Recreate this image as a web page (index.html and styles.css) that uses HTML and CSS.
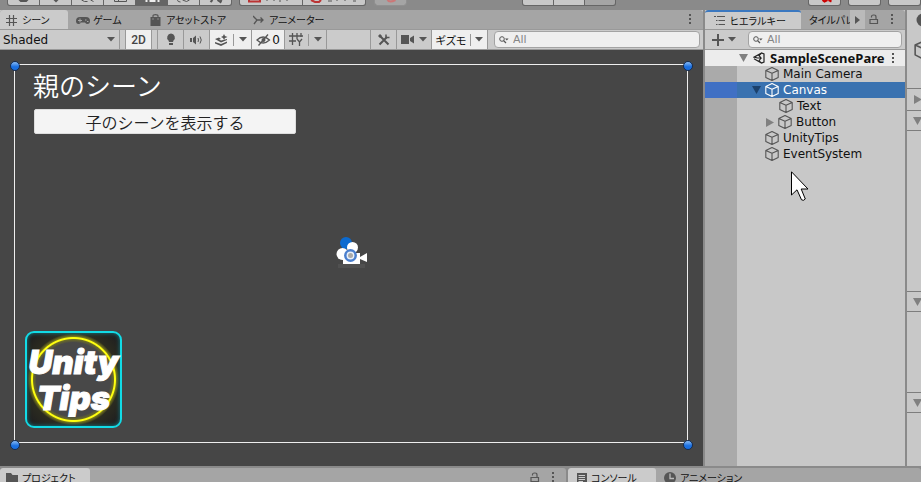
FILE: index.html
```html
<!DOCTYPE html>
<html lang="ja">
<head>
<meta charset="utf-8">
<title>SampleScenePare</title>
<link rel="stylesheet" href="styles.css">
</head>
<body>
<svg class="defs" aria-hidden="true">
  <symbol id="cube" viewBox="0 0 14 14"><path d="M7 .6 13.2 3.5V10.4L7 13.5 .8 10.4V3.5ZM.8 3.5 7 6.3 13.2 3.5M7 6.3V13.5" fill="none" stroke="currentColor" stroke-width="1.1" stroke-linejoin="round"/></symbol>
  <symbol id="down" viewBox="0 0 8 5"><path d="M0 0H8L4 4.6Z" fill="currentColor"/></symbol>
  <symbol id="fold" viewBox="0 0 9 8"><path d="M0 0H9L4.5 8Z" fill="currentColor"/></symbol>
  <symbol id="right" viewBox="0 0 8 9"><path d="M0 0V9L8 4.5Z" fill="currentColor"/></symbol>
  <symbol id="next" viewBox="0 0 5 8"><path d="M0 0V8L5 4Z" fill="currentColor"/></symbol>
  <symbol id="dots" viewBox="0 0 3 11"><path d="M0 0H2V2H0ZM0 4H2V6H0ZM0 8H2V10H0Z" fill="currentColor"/></symbol>
  <symbol id="lock" viewBox="0 0 10 11"><path d="M1 5.5H8.5V9.5H1ZM2.5 3.5V2.5Q2.5 1 4.5 1H5Q7 1 7 3V5.5" fill="none" stroke="currentColor" stroke-width="1.2"/></symbol>
  <symbol id="search" viewBox="0 0 10 8"><circle cx="3" cy="3" r="2.3" fill="none" stroke="currentColor"/><path d="M4.6 4.6 7 7" stroke="currentColor" stroke-width="1.3"/><path d="M6 2.4H9.6L7.8 4.4Z" fill="currentColor"/></symbol>
</svg>

<header class="topbar">
  <div class="group">
    <button class="tool" aria-label="手のひら"><svg viewBox="0 0 30 5"><path d="M10 0H20L18 2H12Z" fill="#555"/></svg></button>
    <button class="tool" aria-label="移動"><svg viewBox="0 0 30 5"><path d="M13 0H18L15.500 2.500Z" fill="#555"/></svg></button>
    <button class="tool" aria-label="回転"><svg viewBox="0 0 30 5"><path d="M9 0 12 1.500H15M18 0 21 1.500" stroke="#555" fill="none"/></svg></button>
    <button class="tool" aria-label="拡大縮小"><svg viewBox="0 0 30 5"><path d="M10 0V1.500H22V0M14 0V1" stroke="#555" fill="none"/></svg></button>
    <button class="tool on" aria-label="矩形"><svg viewBox="0 0 30 5"><path d="M9 0H11V2H9ZM13 0H19V2H13ZM21 0H23V2H21Z" fill="#eee"/></svg></button>
    <button class="tool" aria-label="変形"><svg viewBox="0 0 30 5"><path d="M9 0Q9 2 12 2M14 0 18 1.500 21 0" stroke="#555" fill="none"/></svg></button>
    <button class="tool" aria-label="カスタム"><svg viewBox="0 0 30 5"><path d="M10 2 12 0M17 0 20 2 21 0" stroke="#555" stroke-width="2" fill="none"/></svg></button>
  </div>
  <div class="group pivot">
    <button class="tool wide" aria-label="ピボット"><svg viewBox="0 0 62 5"><path d="M9 0V1.500H20V0" stroke="#b33" stroke-width="2" fill="none"/><path d="M27 0V1M34 0V1M39 1H41M47 0V1" stroke="#555"/></svg></button>
    <button class="tool wide" aria-label="ローカル"><svg viewBox="0 0 62 5"><path d="M8 0 12 2H16L18 0" stroke="#b33" stroke-width="2" fill="none"/><path d="M25 1H29M34 0V1M42 0V1M50 1H53" stroke="#555"/></svg></button>
  </div>
  <div class="group snap"><button class="tool faded" aria-label="スナップ"><svg viewBox="0 0 30 5"><path d="M12 0Q14 3 20 0" stroke="#c77" stroke-width="2" fill="none"/></svg></button></div>
  <div class="group play">
    <button class="tool" aria-label="再生"></button>
    <button class="tool" aria-label="一時停止"></button>
    <button class="tool faded" aria-label="コマ送り"></button>
  </div>
  <div class="group cloud"><button class="tool" aria-label="コラボ"><svg viewBox="0 0 30 5"><path d="M13 0 15 1.500 18 0M19 0 22 1.500" stroke="#c00" stroke-width="2" fill="none"/></svg></button></div>
  <div class="group account"><button class="tool" aria-label="クラウド"></button></div>
  <div class="group layers"><button class="tool" aria-label="レイヤー"></button></div>
</header>

<main class="workspace">
  <section class="panel">
    <nav class="tabs">
      <button class="tab scene-tab active"><svg width="11" height="11" viewBox="0 0 11 11"><path d="M3.500 0V11M7.500 0V11M0 3.500H11M0 7.500H11" stroke="currentColor" stroke-width="1.200"/></svg>シーン</button>
      <button class="tab game-tab"><svg width="14" height="9" viewBox="0 0 14 9"><path d="M4 1H10Q14 1 14 5Q14 8 11.500 8Q10 8 9 6.500H5Q4 8 2.500 8Q0 8 0 5Q0 1 4 1Z" fill="currentColor"/><path d="M2 4.500H6M4 2.500V6.500M9 4H10.500M11 5.500H12.500" stroke="#a5a5a5"/></svg>ゲーム</button>
      <button class="tab store-tab"><svg width="11" height="12" viewBox="0 0 11 12"><path d="M.5 3H10.500V12H.5Z" fill="currentColor"/><path d="M3 4V2Q3 .7 5.500 .7T8 2V4" stroke="currentColor" fill="none" stroke-width="1.200"/><path d="M3 4V6M8 4V6" stroke="#888"/></svg>アセットストア</button>
      <button class="tab animator-tab"><svg width="11" height="10" viewBox="0 0 11 10"><path d="M0 1 4 5 1 9M3 5H10M7.500 2.500 10 5 7.500 7.500" stroke="currentColor" fill="none" stroke-width="1.300"/></svg>アニメーター</button>
      <button class="icon-btn tab-menu" aria-label="メニュー"><svg width="3" height="11"><use href="#dots"/></svg></button>
    </nav>
    <div class="toolbar">
      <label class="shade"><select aria-label="描画モード"><option>Shaded</option></select><svg width="8" height="5"><use href="#down"/></svg></label>
      <button class="tb on two-d">2D</button>
      <button class="tb bulb" aria-label="ライト"><svg width="10" height="13" viewBox="0 0 10 13"><path d="M5 .5A4 4 0 0 1 7.500 7.500L7 9H3L2.500 7.500A4 4 0 0 1 5 .5ZM3 10H7V12H3Z" fill="currentColor"/></svg></button>
      <button class="tb" aria-label="オーディオ"><svg width="13" height="10" viewBox="0 0 13 10"><path d="M0 3H2V7H0ZM3 3 6 .5V9.500L3 7Z" fill="currentColor"/><path d="M8 3Q9 5 8 7M10 1.500Q12.500 5 10 8.500" stroke="currentColor" fill="none"/></svg></button>
      <button class="tb on split" aria-label="エフェクト"><svg width="13" height="12" viewBox="0 0 13 12"><path d="M0 5 4 3.500 6 5 4 5.500 6 6.500 12 5 12 6 6 8.500ZM0 8 6 10 12 7.500V9L6 12 0 9.500ZM9 0 10 2 12.500 3 10 4 9 6 8 4 6 3 8 2Z" fill="currentColor"/></svg><i></i><svg width="8" height="5"><use href="#down"/></svg></button>
      <button class="tb on hidden-count"><svg width="15" height="12" viewBox="0 0 15 12"><path d="M1 6Q7 0 13.500 6Q7 12 1 6ZM2.500 11.500 12 .5" fill="none" stroke="currentColor" stroke-width="1.300"/><circle cx="7.500" cy="6" r="2" fill="currentColor"/></svg>0</button>
      <button class="tb split grid-tb" aria-label="グリッド"><svg width="14" height="13" viewBox="0 0 14 13"><path d="M3.500 0V12M8 0V6M12 0V4M0 3H14M0 8H7M8 6 10.500 9 13 6M10.500 9V13" fill="none" stroke="currentColor" stroke-width="1.300"/></svg><i></i><svg width="8" height="5"><use href="#down"/></svg></button>
      <span class="fill"></span>
      <button class="tb tools" aria-label="ツール"><svg width="12" height="12" viewBox="0 0 12 12"><path d="M1.500 1.500 10.500 10.500M1.500 10.500 9 3" stroke="currentColor" stroke-width="2"/><path d="M8 .5V3.500H11.500" stroke="currentColor" stroke-width="1.500" fill="none"/><path d="M0 2 2 0 4 2 2 4Z" fill="currentColor"/></svg></button>
      <button class="tb camera" aria-label="カメラ"><svg width="13" height="9" viewBox="0 0 13 9"><path d="M0 0H8V9H0ZM9 3 13 .5V8.500L9 6Z" fill="currentColor"/></svg><svg width="8" height="5"><use href="#down"/></svg></button>
      <button class="tb on gizmo">ギズモ<i></i><svg width="8" height="5"><use href="#down"/></svg></button>
      <label class="search"><svg width="10" height="8"><use href="#search"/></svg><input type="search" placeholder="All" aria-label="シーンを検索"></label>
    </div>
    <div class="scene">
      <div class="frame">
        <span class="handle tl"></span><span class="handle tr"></span><span class="handle bl"></span><span class="handle br"></span>
        <h1>親のシーン</h1>
        <button class="show-child">子のシーンを表示する</button>
        <svg class="cam" width="32" height="34" viewBox="0 0 32 34"><path d="M2 27H29V31H2Z" fill="#5a5a5a" opacity=".5"/><circle cx="10" cy="6" r="6" fill="#0b6ad0"/><circle cx="16.500" cy="10.500" r="5.500" fill="#fff"/><circle cx="6.500" cy="17" r="6" fill="#fff"/><path d="M7 16H24V20L31 16V25L24 22V27H7Z" fill="#fff"/><circle cx="14.500" cy="18.500" r="5.200" fill="#e8f0fa" stroke="#4a7fce" stroke-width="2.500"/><circle cx="14.500" cy="18.500" r="2.500" fill="#aaa"/></svg>
        <div class="logo"><span>Unity</span><span>Tips</span></div>
      </div>
    </div>
  </section>

  <section class="panel hierarchy">
    <nav class="tabs">
      <button class="tab hier-tab active"><svg width="11" height="9" viewBox="0 0 11 9"><path d="M0 .5H2M3 .5H11M2 4.500H3.500M4.500 4.500H11M2 8.500H3.500M4.500 8.500H11" stroke="currentColor"/></svg>ヒエラルキー</button>
      <button class="tab tile-tab">タイルパレット</button>
      <button class="next-tab" aria-label="次のタブ"><svg width="5" height="8"><use href="#next"/></svg></button>
      <button class="icon-btn" aria-label="ロック"><svg width="10" height="11"><use href="#lock"/></svg></button>
      <button class="icon-btn menu" aria-label="メニュー"><svg width="3" height="11"><use href="#dots"/></svg></button>
    </nav>
    <div class="toolbar">
      <button class="add" aria-label="作成"><svg width="12" height="12" viewBox="0 0 12 12"><path d="M6 0V12M0 6H12" stroke="currentColor" stroke-width="2"/></svg><svg width="8" height="5"><use href="#down"/></svg></button>
      <label class="search"><svg width="10" height="8"><use href="#search"/></svg><input type="search" placeholder="All" aria-label="ヒエラルキーを検索"></label>
    </div>
    <ul class="tree">
      <li class="root"><svg class="fold" width="9" height="8"><use href="#fold"/></svg><svg width="12" height="12" viewBox="0 0 12 12"><path d="M8.500 1 1 5.200 4.500 6H8L6 3.500 8.500 1 11 2V10L8.500 11 1 6.800M8.500 11 6 9 8 6" fill="none" stroke="#222" stroke-width="1.200"/></svg><b>SampleScenePare</b><svg class="row-dots" width="3" height="11"><use href="#dots"/></svg></li>
      <li><svg width="14" height="14"><use href="#cube"/></svg>Main Camera</li>
      <li class="selected"><svg class="fold" width="9" height="8"><use href="#fold"/></svg><svg width="14" height="14"><use href="#cube"/></svg>Canvas</li>
      <li class="child"><svg width="14" height="14"><use href="#cube"/></svg>Text</li>
      <li class="child"><svg class="fold" width="8" height="9"><use href="#right"/></svg><svg width="14" height="14"><use href="#cube"/></svg>Button</li>
      <li><svg width="14" height="14"><use href="#cube"/></svg>UnityTips</li>
      <li><svg width="14" height="14"><use href="#cube"/></svg>EventSystem</li>
    </ul>
  </section>

  <section class="panel inspector">
    <div class="tabs"><svg width="14" height="14" viewBox="0 0 14 14"><circle cx="7" cy="7" r="6.500" fill="#555"/><path d="M7 3V5M7 6V11" stroke="#ddd" stroke-width="2"/></svg></div>
    <div class="object"><svg width="20" height="20"><use href="#cube"/></svg></div>
    <div class="section closed"><svg width="8" height="9"><use href="#right"/></svg></div>
    <div class="section"><svg width="9" height="8"><use href="#fold"/></svg></div>
    <div class="detail tall"></div>
    <div class="section"><svg width="9" height="8"><use href="#fold"/></svg></div>
    <div class="detail"></div>
    <div class="section"><svg width="9" height="8"><use href="#fold"/></svg></div>
  </section>
</main>

<footer class="dock">
  <nav class="tabs">
    <button class="tab project-tab active"><svg width="12" height="10" viewBox="0 0 12 10"><path d="M0 0H5L6.500 2H12V10H0Z" fill="currentColor"/></svg>プロジェクト</button>
    <span class="fill"></span>
    <button class="icon-btn" aria-label="ロック"><svg width="10" height="11"><use href="#lock"/></svg></button>
    <button class="icon-btn menu" aria-label="メニュー"><svg width="3" height="11"><use href="#dots"/></svg></button>
  </nav>
  <nav class="tabs">
    <button class="tab console-tab active"><svg width="10" height="11" viewBox="0 0 10 11"><path d="M0 0H10V11H0Z" fill="currentColor"/><path d="M1.500 2.500H8M1.500 4.500H8M1.500 6.500H8M1.500 8.500H6" stroke="#ccc"/></svg>コンソール</button>
    <button class="tab animation-tab"><svg width="12" height="12" viewBox="0 0 12 12"><circle cx="6" cy="6" r="6" fill="currentColor"/><path d="M6 1.500V6.500H10" stroke="#bbb" stroke-width="1.300" fill="none"/></svg>アニメーション</button>
  </nav>
</footer>

<svg class="cursor" width="18" height="31" viewBox="0 0 18 31"><path d="M.5 .8V24L6 18.800 10.500 28.800Q12.500 30.300 14.300 28L10.200 18H17Z" fill="#fff" stroke="#000"/></svg>
</body>
</html>
```

FILE: styles.css
```css
* { box-sizing: border-box; }
body {
  margin: 0;
  height: 100vh;
  overflow: hidden;
  display: flex;
  flex-direction: column;
  background: #8a8a8a;
  color: #111;
  font: 12px/16px "DejaVu Sans", "Noto Sans CJK JP", sans-serif;
}
button, input, select { font: inherit; color: inherit; border: 0; padding: 0; margin: 0; background: none; border-radius: 0; }
svg { flex: none; display: block; color: #555; }
.defs { position: absolute; width: 0; height: 0; }
.fill { flex: 1; }

.topbar { display: flex; height: 10px; flex: none; align-items: flex-start; padding-left: 7px; }
.group { display: flex; gap: 1px; height: 6px; background: #666; border-radius: 0 0 3px 3px; overflow: hidden; border: solid #666; border-width: 0 1px 1px; }
.tool { width: 31px; height: 5px; background: #c8c8c8; overflow: hidden; }
.tool svg { height: 5px; width: 100%; }
.tool.wide { width: 62px; }
.tool.on { background: #656565; }
.tool.faded { background: #a5a5a5; }
.pivot { margin-left: 7px; }
.snap { margin-left: 8px; border-color: #909090; }
.play { margin: 0 auto 0 115px; }
.play .tool { width: 30px; }
.cloud, .account { margin-right: 7px; }

.workspace { flex: 1; min-height: 0; display: grid; grid-template-columns: minmax(0, 1fr) 200px 14px; gap: 2px; }
.panel { display: flex; flex-direction: column; min-width: 0; min-height: 0; background: #c8c8c8; }
.tabs { display: flex; height: 19px; flex: none; background: #a5a5a5; border-radius: 3px 3px 0 0; overflow: hidden; }
.tab {
  display: flex; align-items: center; flex: none; gap: 5px; padding: 1px 6px 0;
  font: 400 10px/14px "Noto Sans CJK JP", sans-serif; font-feature-settings: "palt";
  white-space: nowrap; text-align: left;
}
.tab.active { background: #cbcbcb; border-radius: 3px 3px 0 0; }
.scene-tab { width: 68px; }
.game-tab { width: 74px; padding-left: 8px; gap: 3px; }
.store-tab { width: 103px; padding-left: 8px; }
.animator-tab { padding-left: 8px; }
.icon-btn { display: flex; align-items: center; justify-content: center; width: 18px; flex: none; }
.icon-btn.menu { margin-right: 4px; }
.tab-menu { margin: 0 4px 0 auto; }

.toolbar { display: flex; height: 21px; flex: none; background: #cbcbcb; border: solid #999; border-width: 1px 0; }
.shade { display: flex; align-items: center; width: 120px; border-right: 1px solid #999; padding: 0 4px 0 3px; }
.shade select { appearance: none; flex: 1; min-width: 0; outline: 0; }
.tb { display: flex; align-items: center; justify-content: center; width: 26px; flex: none; border-right: 1px solid #999; white-space: nowrap; }
.tb.on { background: #efefef; }
.tb i { width: 1px; height: 12px; background: #999; }
.two-d { width: 27px; margin-left: 5px; border-left: 1px solid #999; font: 500 12px/16px Roboto, sans-serif; color: #444; }
.bulb { width: 27px; margin-left: 5px; border-left: 1px solid #999; }
.split { width: 42px; gap: 5px; }
.hidden-count { width: 33px; gap: 1px; }
.tools { width: 27px; border-left: 1px solid #999; }
.camera { width: 35px; gap: 5px; }
.gizmo { width: 56px; gap: 4px; font: 400 11px/16px "Noto Sans CJK JP", sans-serif; font-feature-settings: "palt"; }
.search { display: flex; align-items: center; gap: 4px; margin: 1px 3px 1px 6px; padding: 0 4px; width: 206px; min-width: 0; background: #efefef; border: 1px solid #a3a3a3; border-radius: 4px; }
.search input { flex: 1; min-width: 0; width: 0; height: 14px; outline: 0; appearance: none; font-size: 11px; line-height: 14px; }
.search input::placeholder { color: #858585; opacity: 1; }

.scene { flex: 1; min-height: 0; display: flex; padding: 14px 15px 23px 14px; background: #464646; }
.frame { position: relative; flex: 1; border: 1px solid #eee; padding: 2px 10px 14px; display: flex; flex-direction: column; align-items: flex-start; }
.handle { position: absolute; width: 10px; height: 10px; border-radius: 50%; border: 1px solid #122c55; background: linear-gradient(#8abcf5, #1a6fe0 60%); }
.tl { left: -5px; top: -4px; }
.tr { right: -6px; top: -4px; }
.bl { left: -5px; bottom: -8px; }
.br { right: -6px; bottom: -8px; }
.frame h1 { margin: 0 0 6px 8px; font: 350 26px/36px "Noto Sans CJK JP", sans-serif; color: #fff; }
.show-child { width: 262px; height: 25px; margin-left: 9px; border-radius: 2px; background: #f4f4f4; border: 1px solid #ddd; color: #222; font: 350 16px/22px "Noto Sans CJK JP", sans-serif; }
.cam { position: absolute; left: 321px; top: calc(50% - 17px); }
.logo {
  margin-top: auto; width: 97px; height: 97px; padding-top: 11px; border: 2px solid #12dbe6; border-radius: 9px;
  background: radial-gradient(circle at center, #484848 37px, #6b6b28 40px, #ffff10 41px, #ffff10 42px, #77771c 43px, #2b2b20 46px, #202020 60px);
  display: flex; flex-direction: column; align-items: center;
  box-shadow: inset 0 0 4px #12808a;
  color: #fff; font: italic 900 33px/36px Inter, sans-serif; -webkit-text-stroke: 1px #fff;
}

.hierarchy .tab.active { border-top: 2px solid #3b78c0; padding-top: 0; }
.hier-tab { width: 96px; padding-left: 9px; }
.tile-tab { flex: 1; min-width: 0; overflow: hidden; padding: 1px 0 0 8px; }
.next-tab { width: 15px; flex: none; background: #bababa; display: flex; align-items: center; justify-content: center; }
.add { display: flex; align-items: center; gap: 4px; padding-left: 7px; }
.hierarchy .search { flex: 1; margin-left: 12px; margin-right: 3px; }
.tree { flex: 1; margin: 0; padding: 0; list-style: none; background: linear-gradient(90deg, #aaa 32px, #c8c8c8 32px); }
.tree li { display: flex; align-items: center; height: 16px; padding-left: 60px; gap: 4px; line-height: 17px; white-space: nowrap; }
.tree .fold { margin-left: -13px; color: #808080; }
.tree .root { background: #ececec; padding-left: 47px; gap: 5px; }
.root b { flex: 1; font-family: "Noto Sans", sans-serif; font-size: 13px; }
.row-dots { margin-right: 10px; }
.tree .selected { background: linear-gradient(90deg, #4070c4 32px, #3a72b0 32px); color: #fff; }
.selected svg { color: #fff; }
.tree .selected .fold { color: #1c416c; }
.tree .child { padding-left: 74px; }

.inspector .tabs { align-items: center; padding-left: 9px; background: #c8c8c8; }
.inspector { overflow: hidden; }
.object { height: 59px; padding: 11px 0 0 7px; flex: none; }
.section { display: flex; align-items: center; height: 21px; flex: none; padding-left: 6px; border: solid; border-width: 1px 0; border-color: #7d7d7d #b4b4b4; overflow: hidden; }
.section svg { color: #808080; }
.section.closed { height: 22px; border-bottom: 0; padding-left: 7px; }
.detail { height: 80px; flex: none; }
.detail.tall { height: 160px; }

.dock { display: grid; grid-template-columns: minmax(0, 566px) minmax(0, 1fr); gap: 2px; height: 16px; flex: none; padding-top: 2px; overflow: hidden; }
.dock .tab { padding-top: 1px; gap: 4px; }
.project-tab { width: 90px; }
.console-tab { width: 88px; padding-left: 9px; }
.animation-tab { padding-left: 8px; }

.cursor { position: absolute; left: 791px; top: 171px; }
```
